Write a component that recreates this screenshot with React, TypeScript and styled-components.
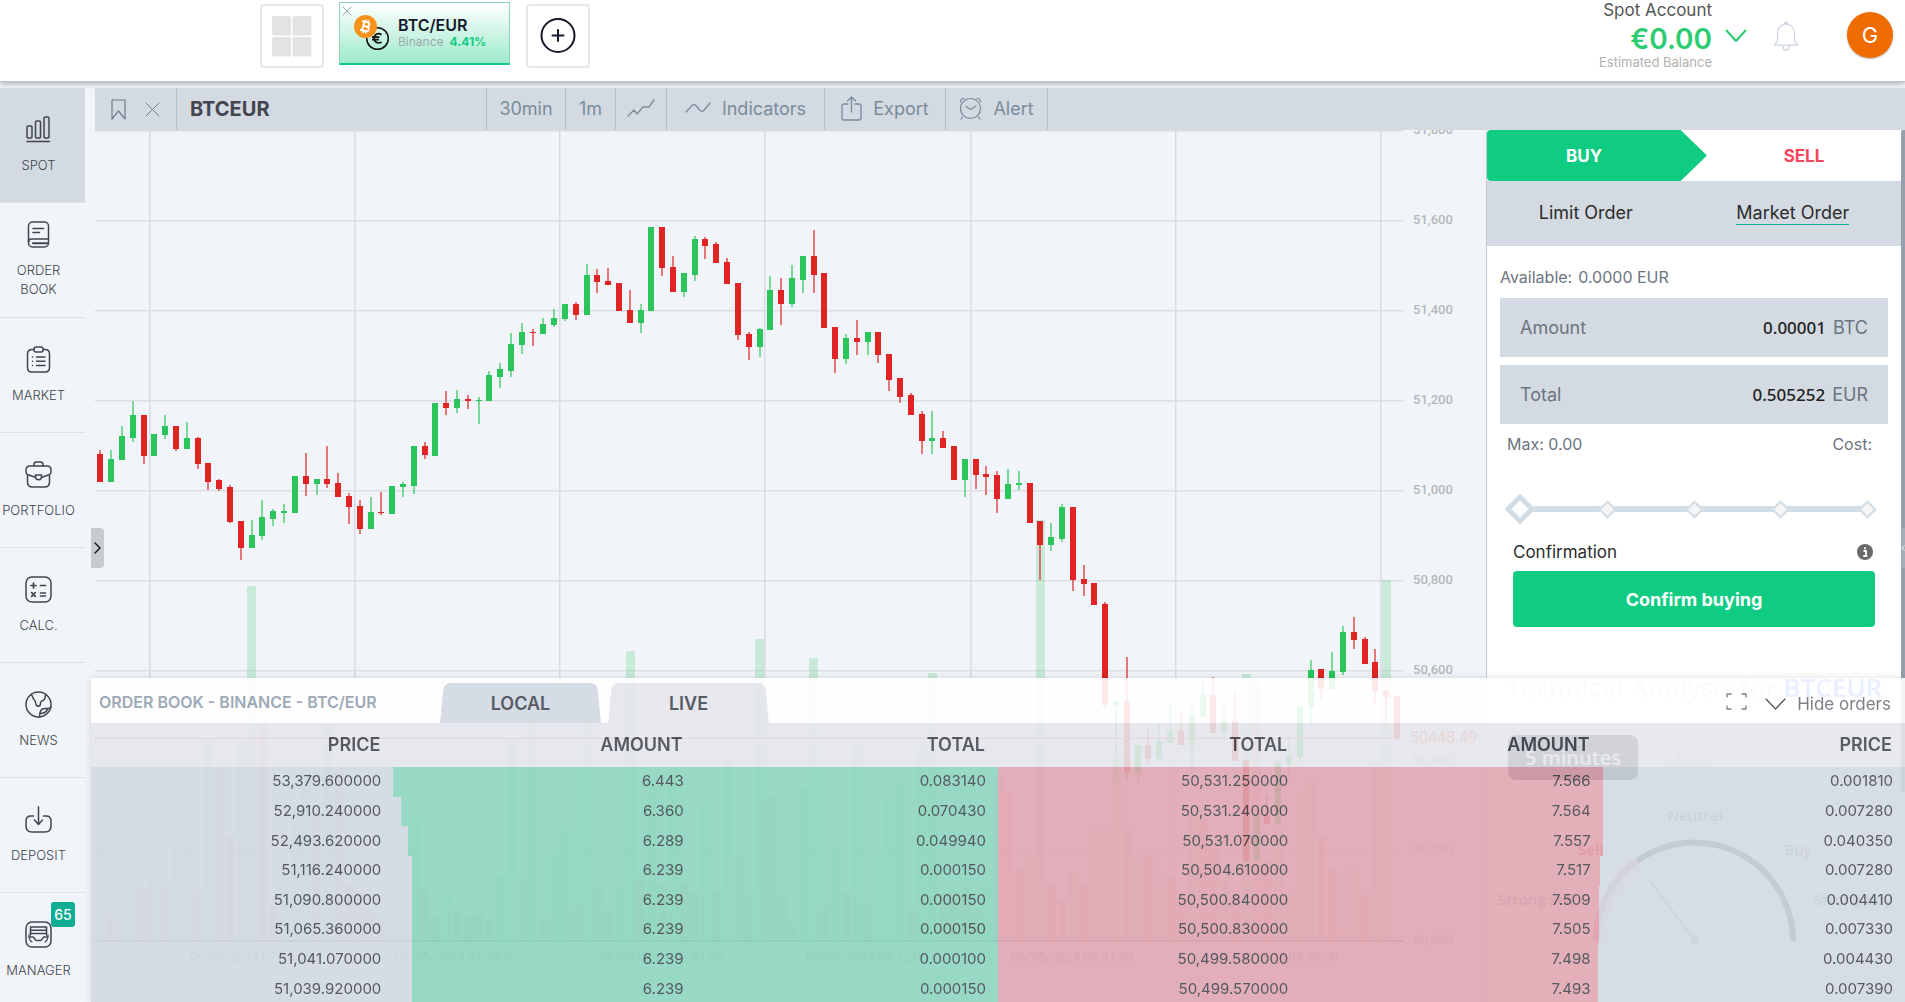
import React from "react";
import styled, { createGlobalStyle, css } from "styled-components";

const GlobalStyle = createGlobalStyle`
  * { box-sizing: border-box; }
  html, body, #root { height: 100%; margin: 0; }
  body {
    background: #f1f4f8;
    font-family: Inter, "Noto Sans", sans-serif;
    font-size: 16px;
    color: #3b3f46;
    overflow: hidden;
  }
  button { font: inherit; color: inherit; background: none; border: 0; padding: 0; cursor: pointer; }
`;

/* ---------- data ---------- */

type Candle = [string, number, number, number, number];

// colour, body top, body bottom, wick top, wick bottom
const candles: Candle[] = [
  ["r", 454, 482, 450, 482], ["g", 459, 482, 450, 482], ["g", 436, 460, 426, 460], ["g", 415, 438, 401, 442],
  ["r", 415, 456, 415, 464], ["g", 434, 456, 434, 456], ["g", 426, 435, 415, 439], ["r", 426, 449, 426, 451],
  ["g", 438, 449, 422, 449], ["r", 438, 464, 437, 469], ["r", 463, 482, 463, 490], ["r", 480, 489, 479, 491],
  ["r", 487, 522, 485, 523], ["r", 521, 548, 521, 560], ["g", 535, 548, 520, 548], ["g", 517, 536, 500, 540],
  ["g", 511, 519, 509, 526], ["g", 511, 513, 504, 523], ["g", 476, 513, 476, 513], ["r", 476, 484, 453, 496],
  ["g", 479, 484, 479, 495], ["r", 479, 484, 446, 488], ["r", 483, 497, 473, 497], ["r", 496, 507, 493, 524],
  ["r", 506, 529, 500, 534], ["g", 512, 529, 497, 529], ["r", 512, 513, 492, 515], ["g", 486, 514, 486, 514],
  ["g", 484, 487, 482, 497], ["g", 446, 486, 446, 494], ["r", 446, 455, 442, 459], ["g", 403, 456, 403, 456],
  ["r", 403, 408, 391, 415], ["g", 399, 408, 390, 413], ["r", 399, 401, 395, 409], ["g", 400, 401, 397, 424],
  ["g", 375, 401, 371, 401], ["g", 369, 377, 363, 388], ["g", 344, 371, 333, 377], ["g", 332, 345, 323, 354],
  ["r", 332, 333, 329, 346], ["g", 324, 334, 318, 334], ["g", 318, 325, 309, 327], ["g", 304, 319, 304, 321],
  ["r", 304, 315, 302, 320], ["g", 275, 315, 264, 315], ["r", 275, 282, 269, 293], ["r", 281, 285, 268, 285],
  ["r", 283, 311, 283, 311], ["r", 310, 323, 290, 323], ["g", 310, 323, 304, 333], ["g", 227, 311, 227, 311],
  ["r", 227, 268, 227, 276], ["r", 267, 292, 256, 292], ["g", 273, 292, 273, 297], ["g", 239, 275, 236, 281],
  ["r", 239, 246, 237, 259], ["r", 244, 263, 242, 263], ["r", 262, 284, 258, 284], ["r", 283, 335, 283, 340],
  ["r", 334, 347, 332, 360], ["g", 329, 347, 328, 357], ["g", 290, 330, 276, 330], ["r", 290, 304, 278, 325],
  ["g", 278, 304, 265, 307], ["g", 256, 280, 256, 293], ["r", 256, 275, 230, 293], ["r", 273, 328, 273, 328],
  ["r", 327, 359, 327, 373], ["g", 338, 359, 334, 364], ["r", 338, 342, 320, 355], ["g", 332, 342, 332, 355],
  ["r", 332, 355, 332, 363], ["r", 354, 380, 354, 391], ["r", 378, 397, 378, 403], ["r", 395, 415, 393, 415],
  ["r", 414, 441, 411, 454], ["g", 438, 441, 411, 454], ["r", 438, 448, 431, 448], ["r", 446, 480, 446, 480],
  ["g", 459, 480, 459, 497], ["r", 459, 475, 459, 489], ["r", 474, 477, 466, 495], ["r", 475, 499, 471, 513],
  ["g", 484, 499, 469, 499], ["g", 483, 485, 471, 490], ["r", 483, 523, 483, 523], ["r", 521, 545, 521, 580],
  ["g", 537, 545, 523, 551], ["g", 507, 539, 504, 542], ["r", 507, 580, 507, 591], ["r", 579, 584, 565, 596],
  ["r", 583, 605, 583, 605], ["r", 604, 705, 602, 708], ["g", 701, 705, 701, 779], ["r", 701, 773, 657, 779],
  ["g", 745, 773, 745, 783], ["r", 745, 759, 728, 765], ["g", 742, 759, 723, 759], ["g", 731, 743, 703, 743],
  ["r", 731, 745, 710, 745], ["g", 716, 745, 700, 770], ["g", 695, 717, 681, 717], ["r", 695, 733, 677, 733],
  ["g", 721, 733, 703, 741], ["r", 721, 761, 692, 761], ["r", 760, 861, 755, 861], ["g", 815, 861, 815, 861],
  ["r", 815, 824, 795, 824], ["g", 763, 824, 759, 824], ["g", 755, 764, 736, 778], ["g", 706, 757, 706, 762],
  ["g", 670, 707, 660, 725], ["r", 669, 689, 669, 700], ["g", 671, 689, 652, 689], ["g", 632, 672, 626, 675],
  ["r", 632, 640, 617, 649], ["r", 639, 664, 637, 664], ["r", 662, 691, 649, 703], ["r", 690, 697, 690, 725],
  ["r", 696, 738, 696, 741],
];

const volumeTops =
  "g821 r916 g908 g858 r889 g879 r887 g846 g814 r894 g739 r769 r837 g740 g586 r722 r905 g875 g809 g774 r812 g725 r772 r885 r892 r911 r919 g916 g909 g819 r890 r916 g895 r910 r917 r914 r920 g876 g739 r878 g715 r916 g851 g829 r905 g702 r889 r909 g887 g651 r879 g785 r885 g775 r883 r893 g805 r891 g757 r856 r895 g639 r796 r894 r922 g788 g658 r905 g850 r893 g735 r904 g855 g799 g784 r909 g745 g673 r895 r889 r886 r909 g884 r774 r792 r869 g855 g520 r885 r900 g871 r885 g829 g825 g754 r829 g858 r855 g885 r877 r900 g815 r819 r849 g880 r895 g674 r682 r862 g829 g894 g794 g780 r837 r870 r922 g868 r895 g762 g580"
    .split(" ")
    .map((v) => ({ up: v[0] === "g", top: Number(v.slice(1)) }));

const priceTicks = ["51,800", "51,600", "51,400", "51,200", "51,000", "50,800", "50,600", "50,400", "50,200", "50,000"];
const timeTicks = ["07:15", "07:34", "07:53", "08:12", "08:31", "08:50"];

const orders = [
  ["53,379.600000", "6.443", "0.083140", "50,531.250000", "7.566", "0.001810", 16.65, 83.35],
  ["52,910.240000", "6.360", "0.070430", "50,531.240000", "7.564", "0.007280", 17.1, 83.35],
  ["52,493.620000", "6.289", "0.049940", "50,531.070000", "7.557", "0.040350", 17.5, 83.35],
  ["51,116.240000", "6.239", "0.000150", "50,504.610000", "7.517", "0.007280", 17.7, 83.2],
  ["51,090.800000", "6.239", "0.000150", "50,500.840000", "7.509", "0.004410", 17.7, 83.15],
  ["51,065.360000", "6.239", "0.000150", "50,500.830000", "7.505", "0.007330", 17.7, 83.15],
  ["51,041.070000", "6.239", "0.000100", "50,499.580000", "7.498", "0.004430", 17.7, 83.1],
  ["51,039.920000", "6.239", "0.000150", "50,499.570000", "7.493", "0.007390", 17.7, 83.1],
] as const;

/* ---------- shell ---------- */

const Page = styled.div`
  height: 100vh;
  display: flex;
  flex-direction: column;
  position: relative;
  overflow: hidden;
`;

const Header = styled.header`
  height: 82px;
  flex: none;
  display: flex;
  align-items: flex-start;
  padding: 2px 12px 0 260px;
  background: #fff;
  border-bottom: 1px solid #c4c4c4;
  box-shadow: 0 1px 6px rgba(0, 0, 0, 0.35);
`;

const SquareButton = styled.button`
  width: 64px;
  height: 64px;
  margin-top: 2px;
  display: grid;
  place-items: center;
  background: #fff;
  border: 2px solid #e8e8e8;
  border-radius: 4px;
`;

const PairCard = styled.div`
  position: relative;
  width: 171px;
  height: 63px;
  margin: 0 16px 0 15px;
  padding: 12px 0 0 14px;
  display: flex;
  align-items: flex-start;
  gap: 8px;
  background: linear-gradient(#fff, #9eeacb);
  border: 1px solid #8fd3b9;
  border-bottom: 2px solid #10cb82;
`;

const CloseButton = styled.button`
  position: absolute;
  left: 2px;
  top: 3px;
  display: flex;
`;

const PairName = styled.div`
  font-size: 16px;
  line-height: 20px;
  font-weight: 600;
  color: #131a2c;
`;

const PairMeta = styled.div`
  display: flex;
  gap: 6px;
  font-size: 12px;
  line-height: 14px;
  color: #9aa8ae;
  b { color: #16cc84; font-weight: 700; }
`;

const Account = styled.div`
  margin-left: auto;
  text-align: right;
`;
const AccountName = styled.div`
  font-size: 17px;
  line-height: 16px;
  color: #555;
`;
const Balance = styled.div`
  font-size: 28px;
  line-height: 32px;
  margin-top: 5px;
  font-weight: 600;
  color: #2ecc71;
`;
const BalanceNote = styled.div`
  font-size: 13px;
  line-height: 14px;
  color: #b2b2b2;
`;
const HeaderIcon = styled.button<{ $top: number; $left: number }>`
  display: flex;
  margin-top: ${(p) => p.$top}px;
  margin-left: ${(p) => p.$left}px;
`;
const Avatar = styled.button`
  width: 46px;
  height: 46px;
  margin: 10px 0 0 48px;
  border-radius: 50%;
  background: #ef6c00;
  color: #fff;
  font-size: 22px;
  box-shadow: 0 1px 2px rgba(0, 0, 0, 0.3);
`;

const Main = styled.div`
  flex: 1;
  min-height: 0;
  margin-top: 6px;
  display: flex;
  gap: 10px;
`;

const Sidebar = styled.nav`
  width: 85px;
  flex: none;
`;
const SideItem = styled.a<{ $active?: boolean }>`
  height: 115px;
  padding-right: 8px;
  display: flex;
  flex-direction: column;
  align-items: center;
  justify-content: center;
  gap: 13px;
  border-bottom: 1px solid #e0e3e6;
  background: ${(p) => (p.$active ? "#d3dae2" : "transparent")};
  color: #41454f;
  font-size: 13px;
  line-height: 19px;
  font-weight: 300;
  text-align: center;
  text-decoration: none;
`;
const SideIcon = styled.span`
  position: relative;
  display: flex;
`;
const Badge = styled.span`
  position: absolute;
  left: 26px;
  top: -19px;
  width: 24px;
  line-height: 25px;
  border-radius: 3px;
  background: #0ead94;
  color: #fff;
  font-size: 14px;
  font-weight: 500;
`;

const Workspace = styled.div`
  flex: 1;
  min-width: 0;
  display: flex;
  flex-direction: column;
`;

const Toolbar = styled.div`
  height: 42px;
  flex: none;
  display: flex;
  background: #d3dae2;
`;
const toolCell = css`
  display: flex;
  align-items: center;
  border-right: 1px solid #b3bfcb;
`;
const ToolIcons = styled.div`
  ${toolCell}
  width: 82px;
  padding-left: 16px;
  gap: 19px;
  button { display: flex; }
`;
const Symbol = styled.div`
  ${toolCell}
  width: 310px;
  padding-left: 13px;
  font-size: 20px;
  font-weight: 700;
  color: #434651;
`;
const ToolButton = styled.button<{ $w: number }>`
  ${toolCell}
  width: ${(p) => p.$w}px;
  justify-content: center;
  gap: 11px;
  font-size: 18px;
  padding-bottom: 2px;
  color: #7a8c9b;
  svg { flex: none; }
`;

const Content = styled.div`
  flex: 1;
  min-height: 0;
  display: flex;
`;
const ChartArea = styled.div`
  flex: 1;
  min-width: 0;
  overflow: hidden;
  svg { display: block; }
`;

/* ---------- trade panel ---------- */

const Trade = styled.aside`
  width: 419px;
  flex: none;
  display: flex;
  align-items: flex-start;
  background: #fff;
  border-left: 1px solid #c5cacf;
`;
const TradeBody = styled.div`
  flex: 1;
  min-width: 0;
  height: 833px;
  border-bottom: 1px solid #c8c8c8;
`;
const ScrollThumb = styled.div`
  flex: none;
  width: 4px;
  height: 663px;
  border-radius: 3px 0 3px 3px;
  background: #979fad;
`;
const SideTabs = styled.div`
  display: flex;
  height: 51px;
`;
const BuyTab = styled.button`
  width: 220px;
  padding-right: 26px;
  border-radius: 4px 0 0 4px;
  background: #10cb82;
  color: #fff;
  font-size: 17px;
  font-weight: 700;
  clip-path: polygon(0 0, 88% 0, 100% 50%, 88% 100%, 0 100%);
`;
const SellTab = styled.button`
  flex: 1;
  color: #f6465d;
  font-size: 17px;
  font-weight: 700;
`;
const TypeRow = styled.div`
  height: 65px;
  display: flex;
  justify-content: space-around;
  align-items: center;
  background: #d3dae2;
`;
const TypeButton = styled.button<{ $active?: boolean }>`
  font-size: 18px;
  line-height: 22px;
  color: #2c2c2c;
  border-bottom: 1px solid ${(p) => (p.$active ? "#0ead94" : "transparent")};
`;
const Form = styled.form`
  padding: 20px 13px 0;
  color: #6d7481;
  font-size: 16px;
`;
const Available = styled.div`
  height: 32px;
  line-height: 22px;
  display: flex;
  gap: 6px;
`;
const Field = styled.label`
  height: 59px;
  margin-bottom: 8px;
  padding: 0 20px;
  display: flex;
  align-items: center;
  gap: 7px;
  background: #d3dae2;
  font-size: 18px;
`;
const FieldInput = styled.input`
  flex: 1;
  min-width: 0;
  border: 0;
  padding: 0;
  outline: 0;
  background: transparent;
  text-align: right;
  font: 500 17px "Noto Sans", sans-serif;
  color: #1f1f1f;
`;
const MaxRow = styled.div`
  display: flex;
  justify-content: space-between;
  padding: 0 16px 0 7px;
  line-height: 24px;
`;
const Slider = styled.div`
  height: 30px;
  margin: 38px 20px 0;
  display: grid;
  grid-template-columns: minmax(0, 1fr);
  align-items: center;
`;
const Track = styled.div`
  grid-area: 1 / 1;
  height: 6px;
  background: #d3dde5;
`;
const Ticks = styled.div`
  grid-area: 1 / 1;
  display: flex;
  justify-content: space-between;
  margin: 0 -6px;
`;
const Tick = styled.span`
  width: 13px;
  height: 13px;
  border: 2px solid #d3dde5;
  background: #f5f5f5;
  transform: rotate(45deg);
`;
const Range = styled.input`
  grid-area: 1 / 1;
  appearance: none;
  width: calc(100% + 22px);
  height: 30px;
  margin: 0 -11px;
  background: transparent;
  z-index: 1;
  &::-webkit-slider-thumb {
    appearance: none;
    box-sizing: border-box;
    width: 22px;
    height: 22px;
    border: 5px solid #d3dde5;
    background: #fff;
    transform: rotate(45deg);
  }
`;
const ConfirmRow = styled.div`
  display: flex;
  justify-content: space-between;
  align-items: center;
  height: 24px;
  margin: 16px 15px 0 13px;
  font-size: 17px;
  color: #2c2c2c;
`;
const ConfirmButton = styled.button`
  display: block;
  width: calc(100% - 26px);
  height: 56px;
  margin: 7px 13px 0;
  border-radius: 4px;
  background: #10cb82;
  color: #fff;
  font-size: 18px;
  font-weight: 700;
`;
const Analysis = styled.section`
  margin-top: 44px;
  font-family: "Open Sans", "Noto Sans", sans-serif;
  color: #d6dade;
`;
const AnalysisTitle = styled.h2`
  margin: 0;
  font-size: 26px;
  line-height: 32px;
  font-weight: 600;
  text-align: center;
  white-space: nowrap;
  span { color: #2962ff; }
`;
const Periods = styled.div`
  display: flex;
  align-items: center;
  gap: 26px;
  margin: 32px 21px 12px;
`;
const Period = styled.button<{ $active?: boolean }>`
  height: 45px;
  font-size: 20px;
  display: flex;
  align-items: center;
  gap: 10px;
  ${(p) =>
    p.$active &&
    css`
      width: 130px;
      justify-content: center;
      border-radius: 8px;
      background: #2a2e39;
      color: #fff;
      font-weight: 600;
    `}
`;

/* ---------- order book overlay ---------- */

const Book = styled.section`
  position: absolute;
  left: 91px;
  right: 0;
  bottom: 0;
  height: 324px;
  opacity: 0.9;
  background: #d3dae2;
  box-shadow: 0 0 8px rgba(0, 0, 0, 0.15);
  overflow: hidden;
`;
const BookBar = styled.div`
  height: 45px;
  padding: 0 14px 0 8px;
  display: flex;
  align-items: center;
  background: #fff;
  color: #6e737a;
`;
const BookTitle = styled.h3`
  margin: 0;
  width: 341px;
  padding-top: 2px;
  font-size: 16px;
  font-weight: 600;
  color: #94a1ae;
`;
const BookTab = styled.button<{ $active?: boolean }>`
  align-self: flex-end;
  width: 161px;
  height: 40px;
  margin-right: 7px;
  background: ${(p) => (p.$active ? "#d3dae2" : "#e6e7eb")};
  clip-path: polygon(0 100%, 2% 17%, 3% 6%, 5% 1%, 7% 0, 93% 0, 95% 1%, 97% 6%, 98% 17%, 100% 100%);
  font-size: 18px;
  font-weight: 600;
  color: #464b53;
`;
const BookActions = styled.div`
  margin-left: auto;
  padding-top: 6px;
  display: flex;
  align-items: center;
  gap: 18px;
`;
const HideButton = styled.button`
  display: flex;
  align-items: center;
  gap: 11px;
  font-size: 17px;
`;
const Table = styled.table`
  width: 100%;
  table-layout: fixed;
  border-collapse: collapse;
  text-align: right;
  th {
    height: 44px;
    padding: 0 13px 2px 0;
    background: #e6e7eb;
    font-size: 18px;
    font-weight: 600;
    color: #464b53;
  }
  td {
    padding: 0 12px 2px 0;
    font-size: 15px;
    line-height: 27px;
    color: #44494f;
  }
`;
const DepthRow = styled.tr`
  height: calc(237px / 8);
  background: linear-gradient(
    90deg,
    transparent var(--bid),
    #8ed6bf var(--bid) 50%,
    #e0a6b2 50% var(--ask),
    transparent var(--ask)
  );
`;

const Handle = styled.button<{ $right?: boolean }>`
  position: absolute;
  top: 528px;
  height: 40px;
  display: flex;
  align-items: center;
  overflow: hidden;
  ${(p) =>
    p.$right
      ? css`
          right: 0;
          width: 4px;
          background: #a5adb8;
        `
      : css`
          left: 91px;
          width: 13px;
          justify-content: center;
          border-radius: 0 4px 4px 0;
          background: #c7cbce;
        `}
`;

/* ---------- icons ---------- */

const Line = ({ size = 27, w, h, sw = 1.5, color = "currentColor", vb, children }: any) => (
  <svg
    width={w ?? size}
    height={h ?? size}
    viewBox={vb ?? "0 0 27 27"}
    fill="none"
    stroke={color}
    strokeWidth={sw}
    strokeLinecap="round"
    strokeLinejoin="round"
    aria-hidden="true"
  >
    {children}
  </svg>
);

const icons: Record<string, React.ReactNode> = {
  spot: (
    <Line>
      <rect x="2" y="10" width="5" height="12" rx="1.2" />
      <rect x="10.500" y="5" width="5" height="17" rx="1.200" />
      <rect x="19" y="1" width="5" height="21" rx="1.200" />
      <path d="M2 25.500h22.500" />
    </Line>
  ),
  book: (
    <Line>
      <rect x="3.500" y="1" width="20" height="25" rx="4" />
      <path d="M8 7.500h10.500M8 11.500h6.500M3.500 21c0-2 1-3 3-3h17" />
      <path d="M8 22.200h15" strokeWidth="2" />
    </Line>
  ),
  market: (
    <Line>
      <path d="M9 3.500H7c-3 0-4.500 1.500-4.500 4.500v13.500c0 3 1.500 4.500 4.500 4.500h13c3 0 4.500-1.500 4.500-4.500V8c0-3-1.500-4.500-4.500-4.500h-2" />
      <rect x="9" y="1" width="9" height="5" rx="2" />
      <path d="M11.500 11h8.500M11.500 15.300h8.500M11.500 19.600h8.500M7.500 11h.1M7.500 15.300h.1M7.500 19.600h.1" />
    </Line>
  ),
  portfolio: (
    <Line>
      <path d="M9 5V3.500C9 2 10 1 11.500 1h4C17 1 18 2 18 3.500V5" />
      <path d="M5 5h17c2.500 0 4 1.500 4 4v2c0 1.500-.5 2.200-2 2.800l-7 2.400M10.500 16.200L3 13.800c-1.500-.6-2-1.300-2-2.800V9c0-2.500 1.500-4 4-4" />
      <path d="M2.500 14v7c0 3.500 1.500 5 5 5h12c3.500 0 5-1.500 5-5v-7" />
      <path d="M10.500 14h6v2c0 1.700-1.200 2.700-3 2.700s-3-1-3-2.700z" />
    </Line>
  ),
  calc: (
    <Line>
      <rect x="1" y="1" width="25" height="25" rx="6" />
      <path d="M6 9.500h5M8.500 7v5M15.500 9.500h5M6.700 16.700l3.600 3.600M10.300 16.700l-3.600 3.600M15.500 17h5M15.500 20h5" strokeWidth="1.700" />
    </Line>
  ),
  news: (
    <Line>
      <circle cx="13.500" cy="13.500" r="12.500" />
      <path d="M6 3.500c2 1.500 1.500 3.500 3 5 1.500 1.500 1.800 2.500 1.900 4.500.1 1.500 1.400 2.200 2.600 2.200 2 0 2-2 2-3.200 0-3 4.500-2 4.500-5 0-1.500.2-2.500 1-3.500" />
      <path d="M26 16.500c-2 .6-3 1.200-5 1-2.500-.2-4.500.3-5.500 2.500-.8 2-1.200 4-.8 6M15 22.500c3-.2 5-.3 6.500-2.500l1.500-2.500" />
    </Line>
  ),
  deposit: (
    <Line>
      <path d="M8.500 10H6c-3.500 0-5 1.500-5 5v5c0 4 1.500 6 6 6h13c4.500 0 6-2 6-6v-5c0-3.500-1.500-5-5-5h-2.500" />
      <path d="M13.500.8v17M9.500 14l4 4.500 4-4.500" />
    </Line>
  ),
  manager: (
    <Line>
      <rect x="1" y="1" width="25" height="25" rx="6" />
      <path d="M5.500 14V6h16v8M5.500 9.300h16M5.500 12.500h16M4 16h4c1.300 0 1.500 3.500 3.500 3.500h4c2 0 2.200-3.500 3.500-3.500h4" strokeWidth="1.600" />
      <path d="M4 13.500c0 4 .6 6.500 3 7.500M23 13.500c0 4-.6 6.500-3 7.500" strokeWidth="1.200" />
    </Line>
  ),
};

const sideItems = [
  ["spot", "SPOT"],
  ["book", "ORDER BOOK"],
  ["market", "MARKET"],
  ["portfolio", "PORTFOLIO"],
  ["calc", "CALC."],
  ["news", "NEWS"],
  ["deposit", "DEPOSIT"],
  ["manager", "MANAGER"],
];

const CoinPair = () => (
  <svg width="36" height="36" viewBox="0 0 36 36" aria-hidden="true">
    <circle cx="23.500" cy="23.500" r="10.800" fill="none" stroke="#111" strokeWidth="1.500" />
    <path d="M27.500 19.700a4.600 4.600 0 1 0 0 7.200M18 22.200h7.500M18 24.600h7" fill="none" stroke="#111" strokeWidth="1.800" />
    <circle cx="11.500" cy="11.500" r="11.500" fill="#f7931a" />
    <g transform="rotate(14 11.500 11.500)" fill="none" stroke="#fff" strokeWidth="1.900">
      <path d="M7 7h5.500a2.200 2.200 0 0 1 0 4.400H9.300M7 16h6a2.300 2.300 0 0 0 0-4.600H9.300M9.300 7v9M10.300 4.800V7M13 4.800V7M10.300 16v2.300M13 16v2.300" />
    </g>
  </svg>
);

/* ---------- chart ---------- */

const UP = "#2bc55c";
const DOWN = "#e02424";
const candleX = (i: number) => 100.4 + 10.805 * i;

const Chart = () => (
  <svg width="100%" height="100%" role="img" aria-label="BTCEUR candlestick chart" fontFamily="Roboto, sans-serif">
    <g transform="translate(-95 -130)">
      {priceTicks.map((t, i) => (
        <React.Fragment key={t}>
          <rect x="95" y={130 + Math.floor(i * 90)} width="1308" height={i === 9 ? 2 : 1.5} fill={i === 9 ? "#8a9097" : "#dbdfe3"} />
          <text x="1413" y={134 + i * 90} fontSize="13" fontWeight="500" fill="#b4b8bd">
            {t}
          </text>
        </React.Fragment>
      ))}
      <rect x="1380" y="130" width="1.500" height="811" fill="#d8dce0" />
      {timeTicks.map((t, i) => (
        <React.Fragment key={t}>
          <rect x={Math.floor(149 + i * 205.3)} y="130" width="1.500" height="811" fill="#d8dce0" />
          <text x={251 + i * 205.3} y="961" fontSize="13" fill="#a8acb2" textAnchor="middle">
            {`06/08/2024 ${t}:00`}
          </text>
        </React.Fragment>
      ))}
      {volumeTops.map((v, i) => (
        <rect
          key={i}
          x={Math.round(candleX(i) - 4.2)}
          y={v.top}
          width="9"
          height={941 - v.top}
          fill={v.up ? UP : DOWN}
          opacity="0.2"
        />
      ))}
      {candles.map(([c, top, bottom, high, low], i) => {
        const x = Math.round(candleX(i));
        const fill = c === "g" ? UP : DOWN;
        return (
          <g key={i} fill={fill}>
            <rect x={x - 0.600} y={high} width="1.200" height={low - high} />
            <rect x={x - 3} y={top} width="6" height={bottom - top} />
          </g>
        );
      })}
      <rect x="95" y="738" width="1308" height="1" fill="#f0481e" />
      <text x="1410" y="743" fontSize="16" fill="#f0481e">
        50448.49
      </text>
    </g>
  </svg>
);

const GaugeSvg = styled.svg`
  display: block;
`;

const Gauge = () => (
  <GaugeSvg width="100%" height="170" viewBox="0 0 414 170" fontSize="15" fontWeight="600" fill="#8a8f98" textAnchor="middle">
    <path d="M109 149a98.500 98.500 0 0 1 197 0" fill="none" stroke="#4b4e57" strokeWidth="6" />
    <path d="M109 149a98.500 98.500 0 0 1 41-80" fill="none" stroke="#e39aa5" strokeWidth="6" />
    <path d="M115 149a92.500 92.500 0 0 1 39-74" fill="none" stroke="#f5dfe2" strokeWidth="6" />
    <path d="M164 90l44 59" stroke="#a8acb4" strokeWidth="2" />
    <circle cx="208" cy="149" r="4" fill="#a8acb4" />
    <text x="208" y="29">Neutral</text>
    <text x="104" y="63" fill="#f23645">Sell</text>
    <text x="311" y="63">Buy</text>
    <text x="49" y="113">Strong sell</text>
    <text x="366" y="113">Strong buy</text>
  </GaugeSvg>
);

/* ---------- app ---------- */

export default function App() {
  return (
    <Page>
      <GlobalStyle />
      <Header>
        <SquareButton aria-label="Layouts">
          <svg width="40" height="41" viewBox="0 0 40 41" fill="#e3e3e3">
            <rect width="19" height="19.500" rx="2" />
            <rect x="20.500" width="19" height="19.500" rx="2" />
            <rect y="21" width="19" height="19.500" rx="2" />
            <rect x="20.500" y="21" width="19" height="19.500" rx="2" />
          </svg>
        </SquareButton>
        <PairCard>
          <CloseButton aria-label="Close pair">
            <Line size={10} vb="0 0 10 10" sw="1" color="#93a0a3">
              <path d="M1 1l8 8M9 1L1 9" />
            </Line>
          </CloseButton>
          <CoinPair />
          <div>
            <PairName>BTC/EUR</PairName>
            <PairMeta>
              Binance <b>4.41%</b>
            </PairMeta>
          </div>
        </PairCard>
        <SquareButton aria-label="Add pair">
          <Line size={36} vb="0 0 36 36" sw="2" color="#151a2c">
            <circle cx="18" cy="17.500" r="16.500" />
            <path d="M18 12v11M12.500 17.500h11" />
          </Line>
        </SquareButton>
        <Account>
          <AccountName>Spot Account</AccountName>
          <Balance>€0.00</Balance>
          <BalanceNote>Estimated Balance</BalanceNote>
        </Account>
        <HeaderIcon $top={27} $left={13} aria-label="Account menu">
          <Line w={22} h={14} vb="0 0 22 14" sw="2" color="#2ecc71">
            <path d="M1.500 1.500L11 12l9.500-10.500" />
          </Line>
        </HeaderIcon>
        <HeaderIcon $top={19} $left={26} aria-label="Notifications">
          <Line w={26} h={30} vb="0 0 26 30" sw="1.300" color="#cdd6e2">
            <path d="M4.500 20V12a8.500 9 0 0 1 17 0v8l3 4.200H1.500zM10 24.500v1.700a3 3 0 0 0 6 0v-1.700M11.500 3V1.500h3V3" />
          </Line>
        </HeaderIcon>
        <Avatar aria-label="Profile">G</Avatar>
      </Header>

      <Main>
        <Sidebar>
          {sideItems.map(([id, label]) => (
            <SideItem key={id} href={`#${id}`} $active={id === "spot"}>
              <SideIcon>
                {icons[id]}
                {id === "manager" && <Badge>65</Badge>}
              </SideIcon>
              {label}
            </SideItem>
          ))}
        </Sidebar>

        <Workspace>
          <Toolbar>
            <ToolIcons>
              <button aria-label="Bookmark">
                <Line w={15} h={21} vb="0 0 15 21" sw="1.200" color="#6f7d8b">
                  <path d="M1 1h13v19l-6.500-8L1 20z" />
                </Line>
              </button>
              <button aria-label="Clear">
                <Line size={15} vb="0 0 15 15" sw="1" color="#6f7d8b">
                  <path d="M1 1l13 13M14 1L1 14" />
                </Line>
              </button>
            </ToolIcons>
            <Symbol>BTCEUR</Symbol>
            <ToolButton $w={79}>30min</ToolButton>
            <ToolButton $w={50}>1m</ToolButton>
            <ToolButton $w={51} aria-label="Chart type">
              <Line w={28} h={18} vb="0 0 28 18" sw="1.300">
                <path d="M1 17l6-6 3 4 6-7h6l5-7" />
              </Line>
            </ToolButton>
            <ToolButton $w={158}>
              <Line w={26} h={12} vb="0 0 26 12" sw="1.300">
                <path d="M1 10l6-6.500c1.200-1.300 2.500-1.300 3.800 0l4.500 5c1.200 1.200 2.300 1.200 3.500 0L25 1" />
              </Line>
              Indicators
            </ToolButton>
            <ToolButton $w={121}>
              <Line w={21} h={25} vb="0 0 21 25" sw="1.300">
                <path d="M7 8H3C1.700 8 1 8.700 1 10v12c0 1.300.7 2 2 2h15c1.300 0 2-.7 2-2V10c0-1.300-.7-2-2-2h-4M10.500 16V1M6.500 5l4-4 4 4" />
              </Line>
              Export
            </ToolButton>
            <ToolButton $w={102}>
              <Line w={23} h={23} vb="0 0 23 23" sw="1.200">
                <circle cx="11.500" cy="11.500" r="10" />
                <path d="M7 9.500l4.500 3L17 9M3.500 20L2 22M19.500 20l1.500 2M1.500 5c0-2 1.500-3.500 3.500-3.500M21.500 5c0-2-1.500-3.500-3.500-3.500" />
              </Line>
              Alert
            </ToolButton>
          </Toolbar>

          <Content>
            <ChartArea>
              <Chart />
            </ChartArea>
            <Trade>
              <TradeBody>
                <SideTabs>
                  <BuyTab>BUY</BuyTab>
                  <SellTab>SELL</SellTab>
                </SideTabs>
                <TypeRow>
                  <TypeButton>Limit Order</TypeButton>
                  <TypeButton $active>Market Order</TypeButton>
                </TypeRow>
                <Form onSubmit={(e) => e.preventDefault()}>
                  <Available>
                    <span>Available:</span>
                    <span>0.0000 EUR</span>
                  </Available>
                  <Field>
                    Amount
                    <FieldInput defaultValue="0.00001" />
                    <span>BTC</span>
                  </Field>
                  <Field>
                    Total
                    <FieldInput defaultValue="0.505252" />
                    <span>EUR</span>
                  </Field>
                  <MaxRow>
                    <span>Max: 0.00</span>
                    <span>Cost:</span>
                  </MaxRow>
                  <Slider>
                    <Track />
                    <Ticks>
                      {[0, 25, 50, 75, 100].map((t) => (
                        <Tick key={t} />
                      ))}
                    </Ticks>
                    <Range type="range" min="0" max="100" defaultValue="0" aria-label="Share of balance" />
                  </Slider>
                  <ConfirmRow>
                    Confirmation
                    <svg width="16" height="16" viewBox="0 0 16 16" aria-hidden="true">
                      <circle cx="8" cy="8" r="8" fill="#6a6a6a" />
                      <path d="M6.500 7H9v4.500M6.300 12h4M8 3.300v2" stroke="#fff" strokeWidth="1.800" fill="none" />
                    </svg>
                  </ConfirmRow>
                  <ConfirmButton>Confirm buying</ConfirmButton>
                </Form>
                <Analysis>
                  <AnalysisTitle>
                    Technical Analysis for <span>BTCEUR</span>
                  </AnalysisTitle>
                  <Periods>
                    <Period $active>5 minutes</Period>
                    <Period>
                      More
                      <Line w={14} h={8} vb="0 0 14 8">
                        <path d="M1 1l6 6 6-6" />
                      </Line>
                    </Period>
                  </Periods>
                  <Gauge />
                </Analysis>
              </TradeBody>
              <ScrollThumb />
            </Trade>
          </Content>
        </Workspace>
      </Main>

      <Handle aria-label="Expand left panel">
        <Line w={7} h={12} vb="0 0 7 12" sw="1.400" color="#111">
          <path d="M1 1l5 5-5 5" />
        </Line>
      </Handle>
      <Handle $right aria-label="Expand right panel">
        <Line w={7} h={12} vb="0 0 7 12" color="#fff">
          <path d="M6 2L2 6l4 4" />
        </Line>
      </Handle>

      <Book>
        <BookBar>
          <BookTitle>ORDER BOOK - BINANCE - BTC/EUR</BookTitle>
          <BookTab $active>LOCAL</BookTab>
          <BookTab>LIVE</BookTab>
          <BookActions>
            <button aria-label="Full screen">
              <Line w={21} h={17} vb="0 0 21 17" sw="1.300">
                <path d="M1 4V1h4M16 1h4v3M20 13v3h-4M5 16H1v-3" />
              </Line>
            </button>
            <HideButton>
              <Line w={21} h={12} vb="0 0 21 12" sw="1.200" color="#3c4047">
                <path d="M1 1l9.500 10L20 1" />
              </Line>
              Hide orders
            </HideButton>
          </BookActions>
        </BookBar>
        <Table>
          <thead>
            <tr>
              {["PRICE", "AMOUNT", "TOTAL", "TOTAL", "AMOUNT", "PRICE"].map((h, i) => (
                <th key={i} scope="col">
                  {h}
                </th>
              ))}
            </tr>
          </thead>
          <tbody>
            {orders.map(([a, b, c, d, e, f, bid, ask]) => (
              <DepthRow key={a} style={{ "--bid": `${bid}%`, "--ask": `${ask}%` } as React.CSSProperties}>
                {[a, b, c, d, e, f].map((v, i) => (
                  <td key={i}>{v}</td>
                ))}
              </DepthRow>
            ))}
          </tbody>
        </Table>
      </Book>
    </Page>
  );
}
